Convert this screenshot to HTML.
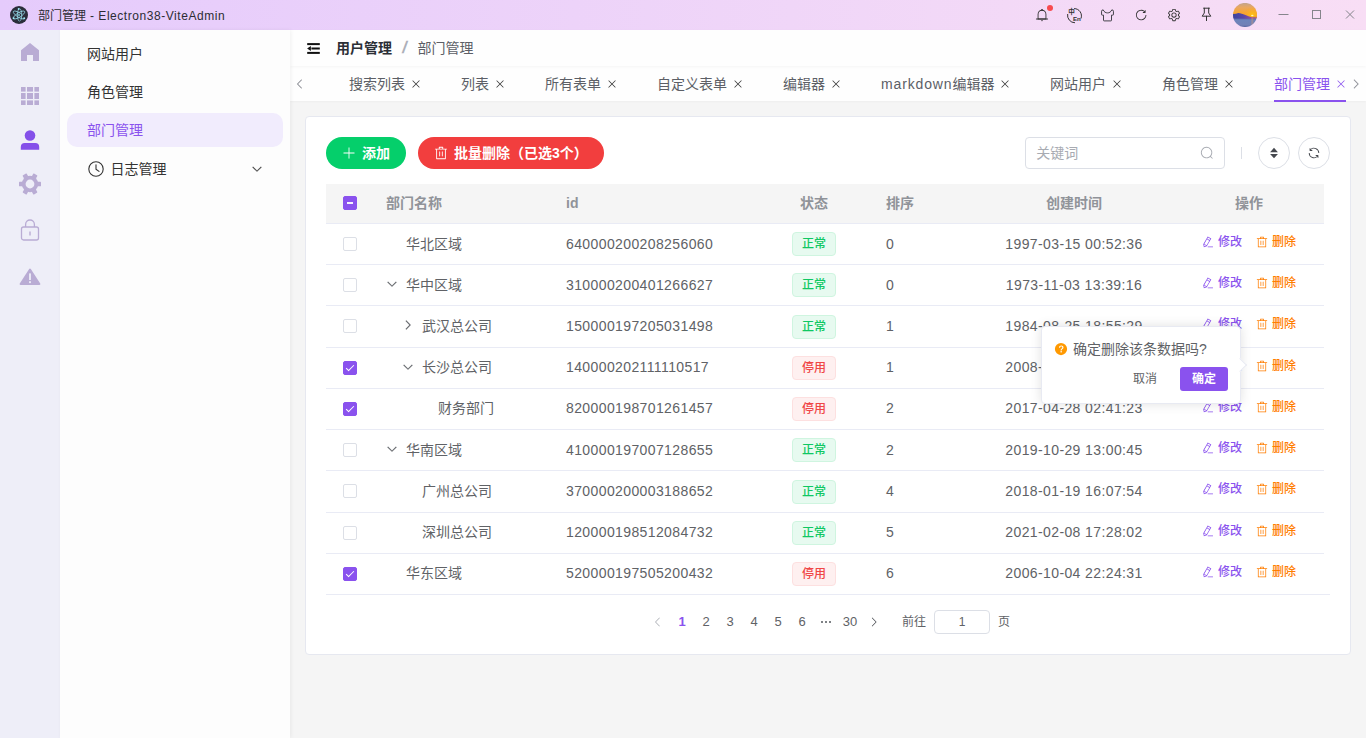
<!DOCTYPE html>
<html lang="zh-CN">
<head>
<meta charset="utf-8">
<title>部门管理 - Electron38-ViteAdmin</title>
<style>
*{box-sizing:border-box;margin:0;padding:0}
html,body{width:1366px;height:738px;overflow:hidden}
body{position:relative;font-family:"Liberation Sans","Noto Sans CJK SC",sans-serif;font-size:14px;color:#606266;background:#f5f5f5}
.abs{position:absolute}
svg{display:block}
/* title bar */
#titlebar{position:absolute;left:0;top:0;width:1366px;height:30px;background:linear-gradient(90deg,#e5cbfc 0%,#f8def5 100%)}
#titlebar .ttl{position:absolute;left:38px;top:0.6px;height:30px;line-height:31px;font-size:12px;color:#2c2c34;white-space:nowrap}
#titlebar .ti{position:absolute;top:0;height:30px}
/* icon bar */
#iconbar{position:absolute;left:0;top:30px;width:60px;height:708px;background:#eeeef8}
#iconbar svg{position:absolute}
/* submenu */
#submenu{position:absolute;left:60px;top:30px;width:230px;height:708px;background:#fdfdfd;box-shadow:1px 0 4px rgba(0,0,0,.06);z-index:3}
#submenu .mi{position:absolute;left:7px;width:216px;height:34px;line-height:35.4px;padding-left:20px;font-size:14px;color:#333;border-radius:10px;white-space:nowrap}
#submenu .mi.act{background:#f1ecfd;color:#8a52ee}
/* header */
#header{position:absolute;left:290px;top:30px;width:1076px;height:36px;background:#fefefe;z-index:2;box-shadow:0 1px 3px rgba(0,0,0,.04)}
#tabs{position:absolute;left:290px;top:66px;width:1076px;height:35px;background:#fefefe;z-index:1;box-shadow:0 1px 2px rgba(0,0,0,.03)}
#tabs .tab{position:absolute;top:0;height:36px;line-height:36px;font-size:14px;color:#5c5f66;white-space:nowrap}
#tabs .tab .x{display:inline-block;width:12px;height:12px;margin-left:4.5px;margin-right:-0.5px;vertical-align:-0.7px;fill:#333}
#tabs .tab.act{color:#8a52ee}
#tabs .tab.act .x{fill:#8a52ee}
/* card */
#card{position:absolute;left:305px;top:116px;width:1046px;height:539px;background:#fff;border:1px solid #e6e8f0;border-radius:4px}

/* toolbar (coordinates relative to card's padding box: card at 305,116 with 1px border => origin 306,117) */
.btn{position:absolute;top:20px;height:32px;border-radius:16px;color:#fff;font-size:14px;font-weight:700;line-height:32px;white-space:nowrap}
.btn svg{position:absolute;top:9px}
.btn span{position:absolute;top:0}
#search{position:absolute;left:719px;top:20px;width:200px;height:32px;border:1px solid #dcdfe6;border-radius:4px;background:#fff}
#search .ph{position:absolute;left:10.3px;top:0;line-height:30px;font-size:14px;color:#a8abb2}
.cbtn{position:absolute;top:20px;width:32px;height:32px;border:1px solid #dcdfe6;border-radius:50%;background:#fff}
/* table */
#thead{position:absolute;left:20px;top:67px;width:998px;height:40px;background:#f5f5f5;border-bottom:1px solid #e9ebf5;font-weight:700;color:#909399;font-size:14px;line-height:38px}
.row{position:absolute;left:20px;width:998px;height:41px;border-bottom:1px solid #e9ebf5;font-size:14px;line-height:40px;color:#606266}
.c{position:absolute;top:0.2px;white-space:nowrap}
#thead .c{top:0}
.row.up .c{top:-0.8px}
.num{letter-spacing:.39px}
.cb{position:absolute;left:17px;width:14px;height:14px;border:1px solid #dcdfe6;border-radius:2px;background:#fff}
.cb.on{background:#8a52ee;border-color:#8a52ee}
.cb.on:after{content:"";position:absolute;left:4px;top:1px;width:3px;height:7px;border:1px solid #fff;border-left:0;border-top:0;transform:rotate(45deg)}
.cb.ind{background:#8a52ee;border-color:#8a52ee}
.cb.ind:after{content:"";position:absolute;left:3px;top:5.2px;width:6px;height:1.5px;background:#fff;opacity:.92}
.tag{position:absolute;left:466px;top:8px;width:44px;height:24px;border-radius:4px;font-size:12px;font-weight:500;line-height:22px;text-align:center;border:1px solid}
.tag.ok{color:#0fc863;background:#e7faf0;border-color:#cff5e0}
.tag.no{color:#f04646;background:#fef0f0;border-color:#fde0e0}
.op{position:absolute;top:0;font-size:12px;font-weight:500;line-height:37px;white-space:nowrap}
.op svg{position:absolute;top:12px}
.exp{position:absolute;top:14.5px}
/* pagination */
#pager{position:absolute;left:340px;top:493px;height:24px;line-height:24px;font-size:13px;color:#606266;white-space:nowrap}
#pager .p{position:absolute;top:0;width:24px;text-align:center}
/* popconfirm */
#pop{position:absolute;left:1041px;top:326px;width:200px;height:78px;background:#fff;border:1px solid #e8eaf2;border-radius:4px;box-shadow:0 0 12px rgba(0,0,0,.12);z-index:10}
</style>
</head>
<body>
<div id="titlebar">
  <svg class="abs" style="left:10px;top:6px" width="18" height="18" viewBox="0 0 18 18">
    <circle cx="9" cy="9" r="9" fill="#2b2e3b"/>
    <g fill="none" stroke="#9feaf8" stroke-width=".8" opacity=".9">
      <ellipse cx="9" cy="9" rx="6.6" ry="2.2" transform="rotate(-32 9 9)" stroke-dasharray="30 4"/>
      <ellipse cx="9" cy="9" rx="6.6" ry="2.2" transform="rotate(32 9 9)" stroke-dasharray="24 6"/>
      <ellipse cx="9.6" cy="9" rx="6.2" ry="2.2" transform="rotate(90 9.6 9)" stroke-dasharray="26 4"/>
    </g>
    <circle cx="9" cy="9" r=".9" fill="#7fc8d6"/>
    <circle cx="8.6" cy="3" r=".9" fill="#9feaf8"/><circle cx="3.6" cy="12.2" r="1" fill="#9feaf8"/><circle cx="14.2" cy="12.2" r="1" fill="#9feaf8"/>
  </svg>
  <div class="ttl">部门管理<span style="letter-spacing:.55px"> - Electron38-ViteAdmin</span></div>
  <!-- bell -->
  <svg class="abs" style="left:1035px;top:8px" width="14" height="14" viewBox="0 0 1024 1024" fill="#333"><path d="M512 64a64 64 0 0 1 64 64v64H448v-64a64 64 0 0 1 64-64"/><path d="M256 768h512V448a256 256 0 1 0-512 0zm256-640a320 320 0 0 1 320 320v384H192V448a320 320 0 0 1 320-320"/><path d="M96 768h832q32 0 32 32t-32 32H96q-32 0-32-32t32-32m352 128h128a64 64 0 0 1-128 0"/></svg>
  <div class="abs" style="left:1046.6px;top:4.6px;width:6.8px;height:6.8px;border-radius:50%;background:#f84a4f"></div>
  <!-- translate -->
  <svg class="abs" style="left:1066px;top:6.6px" width="17" height="17" viewBox="0 0 17 17">
    <path d="M8.5 1.55 A7.1 7.1 0 0 1 15.1 11.2" fill="none" stroke="#333" stroke-width="1" stroke-linecap="round"/>
    <path d="M8.6 15.75 A7.1 7.1 0 0 1 1.6 7.4" fill="none" stroke="#333" stroke-width="1" stroke-linecap="round"/>
    <text x="2.3" y="7.4" font-size="6.6" font-weight="700" fill="#333" font-family="Liberation Sans, Noto Sans CJK SC, sans-serif">中</text>
    <text x="6.9" y="14" font-size="6.2" font-weight="700" fill="#333" font-family="Liberation Sans, sans-serif">En</text>
  </svg>
  <!-- tshirt -->
  <svg class="abs" style="left:1101px;top:8.5px" width="13" height="13" viewBox="0 0 13 13" fill="none" stroke="#3c3c42" stroke-width=".95" stroke-linejoin="round"><path d="M2.2 0.9 Q0.55 0.9 0.55 2.2 V5.6 Q0.55 6.1 1.05 6.1 H2.5 V11.3 Q2.5 11.9 3.1 11.9 H9.9 Q10.5 11.9 10.5 11.3 V6.1 H11.95 Q12.45 6.1 12.45 5.6 V2.2 Q12.45 0.9 10.8 0.9 C9.9 3 8.3 3.9 6.5 3.9 C4.7 3.9 3.1 3 2.2 0.9 Z"/></svg>
  <!-- refresh -->
  <svg class="abs" style="left:1134px;top:8px" width="14" height="14" viewBox="0 0 1024 1024" fill="#333"><path d="M784.512 230.272v-50.56a32 32 0 1 1 64 0v149.056a32 32 0 0 1-32 32H667.52a32 32 0 1 1 0-64h92.992A320 320 0 1 0 524.8 833.152a320 320 0 0 0 320-320h64a384 384 0 0 1-384 384 384 384 0 0 1-384-384 384 384 0 0 1 643.712-282.88z"/></svg>
  <!-- setting -->
  <svg class="abs" style="left:1167px;top:8px" width="14" height="14" viewBox="0 0 1024 1024" fill="#333"><path d="M600.704 64a32 32 0 0 1 30.464 22.208l35.2 109.376c14.784 7.232 28.928 15.36 42.432 24.512l112.384-24.192a32 32 0 0 1 34.432 15.36L944.32 364.8a32 32 0 0 1-4.032 37.504l-77.12 85.12a357.12 357.12 0 0 1 0 49.024l77.12 85.248a32 32 0 0 1 4.032 37.504l-88.704 153.6a32 32 0 0 1-34.432 15.296L708.8 803.904c-13.44 9.088-27.648 17.28-42.368 24.512l-35.264 109.376A32 32 0 0 1 600.704 960H423.296a32 32 0 0 1-30.464-22.208L357.696 828.48a351.616 351.616 0 0 1-42.56-24.64l-112.32 24.256a32 32 0 0 1-34.432-15.36L79.68 659.2a32 32 0 0 1 4.032-37.504l77.12-85.248a357.12 357.12 0 0 1 0-48.896l-77.12-85.248A32 32 0 0 1 79.68 364.8l88.704-153.6a32 32 0 0 1 34.432-15.296l112.32 24.256c13.568-9.152 27.776-17.408 42.56-24.64l35.2-109.312A32 32 0 0 1 423.232 64H600.64zm-23.424 64H446.72l-36.352 113.088-24.512 11.968a294.113 294.113 0 0 0-34.816 20.096l-22.656 15.36-116.224-25.088-65.28 113.152 79.68 88.192-1.92 27.136a293.12 293.12 0 0 0 0 40.192l1.92 27.136-79.808 88.192 65.344 113.152 116.224-25.024 22.656 15.296a294.113 294.113 0 0 0 34.816 20.096l24.512 11.968L446.72 896h130.688l36.48-113.152 24.448-11.904a288.282 288.282 0 0 0 34.752-20.096l22.592-15.296 116.288 25.024 65.28-113.152-79.744-88.192 1.92-27.136a293.12 293.12 0 0 0 0-40.256l-1.92-27.136 79.808-88.128-65.344-113.152-116.288 24.96-22.592-15.232a287.616 287.616 0 0 0-34.752-20.096l-24.448-11.904L577.344 128zM512 320a192 192 0 1 1 0 384 192 192 0 0 1 0-384m0 64a128 128 0 1 0 0 256 128 128 0 0 0 0-256"/></svg>
  <!-- pin -->
  <svg class="abs" style="left:1200px;top:7px" width="13" height="15" viewBox="0 0 13 15" fill="none" stroke="#333" stroke-width="1" stroke-linejoin="round" stroke-linecap="round"><path d="M3.6 1.2 H9.4 M4.3 1.2 V6 L2.2 9.2 H10.8 L8.7 6 V1.2 M6.5 9.2 V13.6"/></svg>
  <!-- avatar -->
  <svg class="abs" style="left:1233px;top:3px" width="24" height="24" viewBox="0 0 24 24">
    <defs>
      <clipPath id="avc"><circle cx="12" cy="11.9" r="12"/></clipPath>
      <linearGradient id="sky" x1="0" y1="0" x2="0" y2="1"><stop offset="0" stop-color="#c3a48e"/><stop offset="0.3" stop-color="#e9a760"/><stop offset="0.65" stop-color="#f7a532"/><stop offset="1" stop-color="#f39a2c"/></linearGradient>
      <linearGradient id="sea" x1="0" y1="0" x2="0" y2="1"><stop offset="0" stop-color="#5a62aa"/><stop offset="0.3" stop-color="#6d84bb"/><stop offset="0.8" stop-color="#7281b6"/><stop offset="1" stop-color="#4f5f9c"/></linearGradient>
      <linearGradient id="mtn" x1="0" y1="0" x2="1" y2="0"><stop offset="0" stop-color="#3c44a0"/><stop offset="0.45" stop-color="#5a47a6"/><stop offset="0.75" stop-color="#8a4fa0"/><stop offset="1" stop-color="#c9705e"/></linearGradient>
      <radialGradient id="sun" gradientUnits="userSpaceOnUse" cx="19.3" cy="12.4" r="9"><stop offset="0" stop-color="#ffc60f" stop-opacity="1"/><stop offset="0.4" stop-color="#fbb41c" stop-opacity=".8"/><stop offset="1" stop-color="#f7a532" stop-opacity="0"/></radialGradient>
    </defs>
    <g clip-path="url(#avc)">
      <rect width="24" height="15" fill="url(#sky)"/>
      <rect width="24" height="15" fill="url(#sun)"/>
      <rect y="14.6" width="24" height="9.4" fill="url(#sea)"/>
      <path d="M0 11 L3 10.7 L5.2 10 L7 10.3 L9.6 11 L12.5 12 L15.5 13.2 L18 13.9 L24 13.7 L24 15.4 L14 15.8 L0 15.6 Z" fill="url(#mtn)"/>
      <rect x="18.3" y="14.2" width="2" height="7.5" fill="#e09a72" opacity=".38"/>
      <ellipse cx="19.3" cy="12.5" rx="1.2" ry=".7" fill="#fff1b8"/>
    </g>
  </svg>
  <!-- window controls -->
  <svg class="abs" style="left:1278px;top:9px" width="80" height="12" viewBox="0 0 80 12" fill="none" stroke="#85858c" stroke-width="1"><path d="M0.5 5.5 H10.5"/><rect x="34.5" y="1.5" width="8" height="8"/><path d="M68 1.5 L76 9.5 M76 1.5 L68 9.5"/></svg>
</div>
<div id="iconbar">
  <!-- home -->
  <svg style="left:21px;top:13px" width="18" height="18" viewBox="0 0 18 18"><path d="M9 0 L18 7.2 V18 H12 V12 H6 V18 H0 V7.2 Z" fill="#b9acd4"/></svg>
  <!-- grid -->
  <svg style="left:21px;top:57px" width="18" height="18" viewBox="0 0 18 18" fill="#b9acd4"><rect x="0" y="0" width="4.6" height="4.6"/><rect x="6" y="0" width="6" height="4.6"/><rect x="13.4" y="0" width="4.6" height="4.6"/><rect x="0" y="6" width="4.6" height="6"/><rect x="6" y="6" width="6" height="6"/><rect x="13.4" y="6" width="4.6" height="6"/><rect x="0" y="13.4" width="4.6" height="4.6"/><rect x="6" y="13.4" width="6" height="4.6"/><rect x="13.4" y="13.4" width="4.6" height="4.6"/></svg>
  <!-- user -->
  <svg style="left:20px;top:100px" width="20" height="20" viewBox="0 0 20 20" fill="#8450e9"><circle cx="10" cy="5.5" r="5.3"/><path d="M0.8 19.8 V17 a4 4 0 0 1 4 -4 H15.2 a4 4 0 0 1 4 4 V19.8 Z"/></svg>
  <!-- gear -->
  <svg style="left:18px;top:142px" width="24" height="24" viewBox="-12 -12 24 24"><g fill="#b9acd4"><circle r="8.2"/><rect x="-2.3" y="-11" width="4.6" height="5" rx=".6" transform="rotate(30)"/><rect x="-2.3" y="-11" width="4.6" height="5" rx=".6" transform="rotate(90)"/><rect x="-2.3" y="-11" width="4.6" height="5" rx=".6" transform="rotate(150)"/><rect x="-2.3" y="-11" width="4.6" height="5" rx=".6" transform="rotate(210)"/><rect x="-2.3" y="-11" width="4.6" height="5" rx=".6" transform="rotate(270)"/><rect x="-2.3" y="-11" width="4.6" height="5" rx=".6" transform="rotate(330)"/></g><circle r="4.4" fill="#eeeef8"/></svg>
  <!-- lock -->
  <svg style="left:20px;top:189px" width="20" height="22" viewBox="0 0 20 22" fill="none" stroke="#b9acd4" stroke-width="1.3"><rect x="1.5" y="8" width="17" height="13" rx="2"/><path d="M5.6 8 V5.4 a4.4 4.4 0 0 1 8.8 0 V8"/><path d="M10 12.6 V16.4" stroke-width="1.4"/></svg>
  <!-- warning -->
  <svg style="left:19px;top:238px" width="22" height="18" viewBox="0 0 22 18"><path d="M11 1.6 L20.4 16 H1.6 Z" fill="#b9acd4" stroke="#b9acd4" stroke-width="2" stroke-linejoin="round"/><rect x="10.1" y="5.4" width="1.8" height="6.6" fill="#eeeef8"/><rect x="10.1" y="13.2" width="1.8" height="1.9" fill="#eeeef8"/></svg>
</div>
<div id="submenu">
  <div class="mi" style="top:6.7px">网站用户</div>
  <div class="mi" style="top:44.5px">角色管理</div>
  <div class="mi act" style="top:83px">部门管理</div>
  <div class="mi" style="top:121.5px"><svg class="abs" style="left:21px;top:9px" width="16" height="16" viewBox="0 0 16 16" fill="none" stroke="#333" stroke-width="1.1" stroke-linecap="round" stroke-linejoin="round"><circle cx="8" cy="8" r="7.2"/><path d="M8 3.7 V8.2 L11 10.4"/></svg><span style="margin-left:23.5px">日志管理</span><svg class="abs" style="left:184px;top:11px" width="12" height="12" viewBox="0 0 1024 1024" fill="#333" stroke="#333" stroke-width="30"><path d="M831.872 340.864 512 652.672 192.128 340.864a30.592 30.592 0 0 0-42.752 0 29.120 29.120 0 0 0 0 41.600L489.664 714.240a32 32 0 0 0 44.672 0l340.288-331.712a29.120 29.120 0 0 0 0-41.728 30.592 30.592 0 0 0-42.752 0z"/></svg></div>
</div>
<div id="header">
  <svg class="abs" style="left:16.5px;top:12.5px" width="13" height="11" viewBox="0 0 13 11" fill="#111"><rect x="0.2" y="0.1" width="12.6" height="2"/><rect x="4.4" y="4.5" width="8.4" height="2"/><rect x="0.2" y="8.9" width="12.6" height="2"/><path d="M3.9 3 V8 L0.1 5.5 Z"/></svg>
  <div class="abs" style="left:46px;top:0;height:36px;line-height:36px;font-size:14px;white-space:nowrap"><b style="color:#2b2f36">用户管理</b><span style="display:inline-block;width:25.5px;text-align:center;color:#adb0b9;font-weight:700;font-size:17px;line-height:30px;vertical-align:0.5px;transform:skewX(-10deg)">/</span><span style="color:#5c5f66">部门管理</span></div>
</div>
<div id="tabs">
  <svg class="abs" style="left:4px;top:12px" width="12" height="12" viewBox="0 0 1024 1024" fill="#85888f" stroke="#85888f" stroke-width="20"><path d="M609.408 149.376 277.76 489.600a32 32 0 0 0 0 44.672l331.648 340.352a29.120 29.120 0 0 0 41.728 0 30.592 30.592 0 0 0 0-42.752L339.264 511.936l311.872-319.872a30.592 30.592 0 0 0 0-42.688 29.120 29.120 0 0 0-41.728 0z"/></svg>
  <div class="tab" style="left:59px">搜索列表<svg class="x" width="12" height="12" viewBox="0 0 1024 1024"><path d="M764.288 214.592 512 466.88 259.712 214.592a31.936 31.936 0 0 0-45.120 45.120L466.752 512 214.528 764.224a31.936 31.936 0 1 0 45.120 45.184L512 557.184l252.288 252.288a31.936 31.936 0 0 0 45.120-45.120L557.120 512.064l252.288-252.352a31.936 31.936 0 1 0-45.120-45.184z"/></svg></div>
  <div class="tab" style="left:171px">列表<svg class="x" width="12" height="12" viewBox="0 0 1024 1024"><path d="M764.288 214.592 512 466.88 259.712 214.592a31.936 31.936 0 0 0-45.120 45.120L466.752 512 214.528 764.224a31.936 31.936 0 1 0 45.120 45.184L512 557.184l252.288 252.288a31.936 31.936 0 0 0 45.120-45.120L557.120 512.064l252.288-252.352a31.936 31.936 0 1 0-45.120-45.184z"/></svg></div>
  <div class="tab" style="left:255px">所有表单<svg class="x" width="12" height="12" viewBox="0 0 1024 1024"><path d="M764.288 214.592 512 466.88 259.712 214.592a31.936 31.936 0 0 0-45.120 45.120L466.752 512 214.528 764.224a31.936 31.936 0 1 0 45.120 45.184L512 557.184l252.288 252.288a31.936 31.936 0 0 0 45.120-45.120L557.120 512.064l252.288-252.352a31.936 31.936 0 1 0-45.120-45.184z"/></svg></div>
  <div class="tab" style="left:367px">自定义表单<svg class="x" width="12" height="12" viewBox="0 0 1024 1024"><path d="M764.288 214.592 512 466.88 259.712 214.592a31.936 31.936 0 0 0-45.120 45.120L466.752 512 214.528 764.224a31.936 31.936 0 1 0 45.120 45.184L512 557.184l252.288 252.288a31.936 31.936 0 0 0 45.120-45.120L557.120 512.064l252.288-252.352a31.936 31.936 0 1 0-45.120-45.184z"/></svg></div>
  <div class="tab" style="left:493px">编辑器<svg class="x" width="12" height="12" viewBox="0 0 1024 1024"><path d="M764.288 214.592 512 466.88 259.712 214.592a31.936 31.936 0 0 0-45.120 45.120L466.752 512 214.528 764.224a31.936 31.936 0 1 0 45.120 45.184L512 557.184l252.288 252.288a31.936 31.936 0 0 0 45.120-45.120L557.120 512.064l252.288-252.352a31.936 31.936 0 1 0-45.120-45.184z"/></svg></div>
  <div class="tab" style="left:591px"><span style="letter-spacing:.85px">markdown</span>编辑器<svg class="x" width="12" height="12" viewBox="0 0 1024 1024"><path d="M764.288 214.592 512 466.88 259.712 214.592a31.936 31.936 0 0 0-45.120 45.120L466.752 512 214.528 764.224a31.936 31.936 0 1 0 45.120 45.184L512 557.184l252.288 252.288a31.936 31.936 0 0 0 45.120-45.120L557.120 512.064l252.288-252.352a31.936 31.936 0 1 0-45.120-45.184z"/></svg></div>
  <div class="tab" style="left:760px">网站用户<svg class="x" width="12" height="12" viewBox="0 0 1024 1024"><path d="M764.288 214.592 512 466.88 259.712 214.592a31.936 31.936 0 0 0-45.120 45.120L466.752 512 214.528 764.224a31.936 31.936 0 1 0 45.120 45.184L512 557.184l252.288 252.288a31.936 31.936 0 0 0 45.120-45.120L557.120 512.064l252.288-252.352a31.936 31.936 0 1 0-45.120-45.184z"/></svg></div>
  <div class="tab" style="left:872px">角色管理<svg class="x" width="12" height="12" viewBox="0 0 1024 1024"><path d="M764.288 214.592 512 466.88 259.712 214.592a31.936 31.936 0 0 0-45.120 45.120L466.752 512 214.528 764.224a31.936 31.936 0 1 0 45.120 45.184L512 557.184l252.288 252.288a31.936 31.936 0 0 0 45.120-45.120L557.120 512.064l252.288-252.352a31.936 31.936 0 1 0-45.120-45.184z"/></svg></div>
  <div class="tab act" style="left:984px">部门管理<svg class="x" width="12" height="12" viewBox="0 0 1024 1024"><path d="M764.288 214.592 512 466.88 259.712 214.592a31.936 31.936 0 0 0-45.120 45.120L466.752 512 214.528 764.224a31.936 31.936 0 1 0 45.120 45.184L512 557.184l252.288 252.288a31.936 31.936 0 0 0 45.120-45.120L557.120 512.064l252.288-252.352a31.936 31.936 0 1 0-45.120-45.184z"/></svg></div>
  <div class="abs" style="left:984px;top:34px;width:72px;height:2px;background:#8a52ee"></div>
  <svg class="abs" style="left:1060px;top:12px" width="12" height="12" viewBox="0 0 1024 1024" fill="#85888f" stroke="#85888f" stroke-width="20"><path d="M340.864 149.312a30.592 30.592 0 0 0 0 42.752L652.736 512 340.864 831.872a30.592 30.592 0 0 0 0 42.752 29.120 29.120 0 0 0 41.728 0L714.24 534.336a32 32 0 0 0 0-44.672L382.592 149.376a29.120 29.120 0 0 0-41.728 0z"/></svg>
</div>
<div id="card">
  <div class="btn" style="left:20px;width:80px;background:#05cf6b"><svg style="left:16px" width="14" height="14" viewBox="0 0 1024 1024" fill="#fff"><path d="M480 480V128a32 32 0 0 1 64 0v352h352a32 32 0 1 1 0 64H544v352a32 32 0 1 1-64 0V544H128a32 32 0 0 1 0-64z"/></svg><span style="left:36px">添加</span></div>
  <div class="btn" style="left:112px;width:186px;background:#f23e3e"><svg style="left:16px" width="14" height="14" viewBox="0 0 1024 1024" fill="#fff"><path d="M160 256H96a32 32 0 0 1 0-64h256V95.936a32 32 0 0 1 32-32h256a32 32 0 0 1 32 32V192h256a32 32 0 1 1 0 64h-64v672a32 32 0 0 1-32 32H192a32 32 0 0 1-32-32zm448-64v-64H416v64zM224 896h576V256H224zm192-128a32 32 0 0 1-32-32V416a32 32 0 0 1 64 0v320a32 32 0 0 1-32 32m192 0a32 32 0 0 1-32-32V416a32 32 0 0 1 64 0v320a32 32 0 0 1-32 32"/></svg><span style="left:36px">批量删除（已选3个）</span></div>
  <div id="search"><span class="ph">关键词</span><svg style="position:absolute;left:174px;top:8px" width="14" height="14" viewBox="0 0 1024 1024" fill="#a8abb2"><path d="m795.904 750.72 124.992 124.928a32 32 0 0 1-45.248 45.248L750.656 795.904a416 416 0 1 1 45.248-45.248zM480 832a352 352 0 1 0 0-704 352 352 0 0 0 0 704"/></svg></div>
  <div class="abs" style="left:935px;top:30px;width:1px;height:12px;background:#dcdfe6"></div>
  <div class="cbtn" style="left:952px"><svg style="position:absolute;left:8px;top:8px" width="14" height="14" viewBox="0 0 1024 1024" fill="#44474d"><path d="m512 128 288 320H224zM224 576h576L512 896z"/></svg></div>
  <div class="cbtn" style="left:992px"><svg style="position:absolute;left:8px;top:8px" width="14" height="14" viewBox="0 0 1024 1024" fill="#44474d"><path d="M771.776 794.88A384 384 0 0 1 128 512h64a320 320 0 0 0 555.712 216.448H654.72a32 32 0 1 1 0-64h149.056a32 32 0 0 1 32 32v148.928a32 32 0 1 1-64 0v-50.56zM276.288 295.616h92.992a32 32 0 0 1 0 64H220.16a32 32 0 0 1-32-32V178.56a32 32 0 0 1 64 0v50.56A384 384 0 0 1 896.128 512h-64a320 320 0 0 0-555.776-216.384z"/></svg></div>
  <div id="thead"><div class="cb ind" style="top:12px"></div><div class="c" style="left:60px">部门名称</div><div class="c" style="left:240px">id</div><div class="c" style="left:428px;width:120px;text-align:center">状态</div><div class="c" style="left:560px">排序</div><div class="c" style="left:648px;width:200px;text-align:center">创建时间</div><div class="c" style="left:848px;width:150px;text-align:center">操作</div></div>
  <div class="row" style="top:107px;height:41px"><div class="cb" style="top:13px"></div><div class="c" style="left:80px">华北区域</div><div class="c num" style="left:240px">640000200208256060</div><div class="tag ok">正常</div><div class="c num" style="left:560px">0</div><div class="c num" style="left:648px;width:200px;text-align:center">1997-03-15 00:52:36</div><div class="op" style="left:876px;color:#8a52ee"><svg style="left:0" width="12" height="12" viewBox="0 0 1024 1024" fill="#8a52ee"><path d="m199.040 672.640 193.984 112 224-387.968-193.920-112-224 388.032zm-23.872 60.160 32.896 148.288 144.896-45.696zM455.040 229.248l193.920 112 56.704-98.112-193.984-112-56.640 98.112zM104.320 708.800l384-665.024 304.768 175.936L409.152 884.800h.064l-248.448 78.336zm384 254.272v-64h448v64h-448z"/></svg><span style="margin-left:16px">修改</span></div><div class="op" style="left:930px;color:#ff7d00"><svg style="left:0" width="12" height="12" viewBox="0 0 1024 1024" fill="#ff7d00"><path d="M160 256H96a32 32 0 0 1 0-64h256V95.936a32 32 0 0 1 32-32h256a32 32 0 0 1 32 32V192h256a32 32 0 1 1 0 64h-64v672a32 32 0 0 1-32 32H192a32 32 0 0 1-32-32zm448-64v-64H416v64zM224 896h576V256H224zm192-128a32 32 0 0 1-32-32V416a32 32 0 0 1 64 0v320a32 32 0 0 1-32 32m192 0a32 32 0 0 1-32-32V416a32 32 0 0 1 64 0v320a32 32 0 0 1-32 32"/></svg><span style="margin-left:16px">删除</span></div></div>
  <div class="row" style="top:148px;height:41px"><div class="cb" style="top:13px"></div><svg style="position:absolute;left:60px;top:12.6px;transform:rotate(90deg);" width="12" height="12" viewBox="0 0 1024 1024" fill="#55585e" stroke="#55585e" stroke-width="36"><path d="M340.864 149.312a30.592 30.592 0 0 0 0 42.752L652.736 512 340.864 831.872a30.592 30.592 0 0 0 0 42.752 29.120 29.120 0 0 0 41.728 0L714.24 534.336a32 32 0 0 0 0-44.672L382.592 149.376a29.120 29.120 0 0 0-41.728 0z"/></svg><div class="c" style="left:80px">华中区域</div><div class="c num" style="left:240px">310000200401266627</div><div class="tag ok">正常</div><div class="c num" style="left:560px">0</div><div class="c num" style="left:648px;width:200px;text-align:center">1973-11-03 13:39:16</div><div class="op" style="left:876px;color:#8a52ee"><svg style="left:0" width="12" height="12" viewBox="0 0 1024 1024" fill="#8a52ee"><path d="m199.040 672.640 193.984 112 224-387.968-193.920-112-224 388.032zm-23.872 60.160 32.896 148.288 144.896-45.696zM455.040 229.248l193.920 112 56.704-98.112-193.984-112-56.640 98.112zM104.320 708.800l384-665.024 304.768 175.936L409.152 884.800h.064l-248.448 78.336zm384 254.272v-64h448v64h-448z"/></svg><span style="margin-left:16px">修改</span></div><div class="op" style="left:930px;color:#ff7d00"><svg style="left:0" width="12" height="12" viewBox="0 0 1024 1024" fill="#ff7d00"><path d="M160 256H96a32 32 0 0 1 0-64h256V95.936a32 32 0 0 1 32-32h256a32 32 0 0 1 32 32V192h256a32 32 0 1 1 0 64h-64v672a32 32 0 0 1-32 32H192a32 32 0 0 1-32-32zm448-64v-64H416v64zM224 896h576V256H224zm192-128a32 32 0 0 1-32-32V416a32 32 0 0 1 64 0v320a32 32 0 0 1-32 32m192 0a32 32 0 0 1-32-32V416a32 32 0 0 1 64 0v320a32 32 0 0 1-32 32"/></svg><span style="margin-left:16px">删除</span></div></div>
  <div class="row" style="top:189px;height:42px"><div class="cb" style="top:13px"></div><svg style="position:absolute;left:76px;top:12.6px;" width="12" height="12" viewBox="0 0 1024 1024" fill="#55585e" stroke="#55585e" stroke-width="36"><path d="M340.864 149.312a30.592 30.592 0 0 0 0 42.752L652.736 512 340.864 831.872a30.592 30.592 0 0 0 0 42.752 29.120 29.120 0 0 0 41.728 0L714.24 534.336a32 32 0 0 0 0-44.672L382.592 149.376a29.120 29.120 0 0 0-41.728 0z"/></svg><div class="c" style="left:96px">武汉总公司</div><div class="c num" style="left:240px">150000197205031498</div><div class="tag ok" style="top:9px">正常</div><div class="c num" style="left:560px">1</div><div class="c num" style="left:648px;width:200px;text-align:center">1984-08-25 18:55:29</div><div class="op" style="left:876px;color:#8a52ee"><svg style="left:0" width="12" height="12" viewBox="0 0 1024 1024" fill="#8a52ee"><path d="m199.040 672.640 193.984 112 224-387.968-193.920-112-224 388.032zm-23.872 60.160 32.896 148.288 144.896-45.696zM455.040 229.248l193.920 112 56.704-98.112-193.984-112-56.640 98.112zM104.320 708.800l384-665.024 304.768 175.936L409.152 884.800h.064l-248.448 78.336zm384 254.272v-64h448v64h-448z"/></svg><span style="margin-left:16px">修改</span></div><div class="op" style="left:930px;color:#ff7d00"><svg style="left:0" width="12" height="12" viewBox="0 0 1024 1024" fill="#ff7d00"><path d="M160 256H96a32 32 0 0 1 0-64h256V95.936a32 32 0 0 1 32-32h256a32 32 0 0 1 32 32V192h256a32 32 0 1 1 0 64h-64v672a32 32 0 0 1-32 32H192a32 32 0 0 1-32-32zm448-64v-64H416v64zM224 896h576V256H224zm192-128a32 32 0 0 1-32-32V416a32 32 0 0 1 64 0v320a32 32 0 0 1-32 32m192 0a32 32 0 0 1-32-32V416a32 32 0 0 1 64 0v320a32 32 0 0 1-32 32"/></svg><span style="margin-left:16px">删除</span></div></div>
  <div class="row up" style="top:231px;height:41px"><div class="cb on" style="top:13px"></div><svg style="position:absolute;left:76px;top:12.6px;transform:rotate(90deg);" width="12" height="12" viewBox="0 0 1024 1024" fill="#55585e" stroke="#55585e" stroke-width="36"><path d="M340.864 149.312a30.592 30.592 0 0 0 0 42.752L652.736 512 340.864 831.872a30.592 30.592 0 0 0 0 42.752 29.120 29.120 0 0 0 41.728 0L714.24 534.336a32 32 0 0 0 0-44.672L382.592 149.376a29.120 29.120 0 0 0-41.728 0z"/></svg><div class="c" style="left:96px">长沙总公司</div><div class="c num" style="left:240px">140000202111110517</div><div class="tag no">停用</div><div class="c num" style="left:560px">1</div><div class="c num" style="left:648px;width:200px;text-align:center">2008-06-12 09:21:47</div><div class="op" style="left:876px;color:#8a52ee"><svg style="left:0" width="12" height="12" viewBox="0 0 1024 1024" fill="#8a52ee"><path d="m199.040 672.640 193.984 112 224-387.968-193.920-112-224 388.032zm-23.872 60.160 32.896 148.288 144.896-45.696zM455.040 229.248l193.920 112 56.704-98.112-193.984-112-56.640 98.112zM104.320 708.800l384-665.024 304.768 175.936L409.152 884.800h.064l-248.448 78.336zm384 254.272v-64h448v64h-448z"/></svg><span style="margin-left:16px">修改</span></div><div class="op" style="left:930px;color:#ff7d00"><svg style="left:0" width="12" height="12" viewBox="0 0 1024 1024" fill="#ff7d00"><path d="M160 256H96a32 32 0 0 1 0-64h256V95.936a32 32 0 0 1 32-32h256a32 32 0 0 1 32 32V192h256a32 32 0 1 1 0 64h-64v672a32 32 0 0 1-32 32H192a32 32 0 0 1-32-32zm448-64v-64H416v64zM224 896h576V256H224zm192-128a32 32 0 0 1-32-32V416a32 32 0 0 1 64 0v320a32 32 0 0 1-32 32m192 0a32 32 0 0 1-32-32V416a32 32 0 0 1 64 0v320a32 32 0 0 1-32 32"/></svg><span style="margin-left:16px">删除</span></div></div>
  <div class="row up" style="top:272px;height:41px"><div class="cb on" style="top:13px"></div><div class="c" style="left:112px">财务部门</div><div class="c num" style="left:240px">820000198701261457</div><div class="tag no">停用</div><div class="c num" style="left:560px">2</div><div class="c num" style="left:648px;width:200px;text-align:center">2017-04-28 02:41:23</div><div class="op" style="left:876px;color:#8a52ee"><svg style="left:0" width="12" height="12" viewBox="0 0 1024 1024" fill="#8a52ee"><path d="m199.040 672.640 193.984 112 224-387.968-193.920-112-224 388.032zm-23.872 60.160 32.896 148.288 144.896-45.696zM455.040 229.248l193.920 112 56.704-98.112-193.984-112-56.640 98.112zM104.320 708.800l384-665.024 304.768 175.936L409.152 884.800h.064l-248.448 78.336zm384 254.272v-64h448v64h-448z"/></svg><span style="margin-left:16px">修改</span></div><div class="op" style="left:930px;color:#ff7d00"><svg style="left:0" width="12" height="12" viewBox="0 0 1024 1024" fill="#ff7d00"><path d="M160 256H96a32 32 0 0 1 0-64h256V95.936a32 32 0 0 1 32-32h256a32 32 0 0 1 32 32V192h256a32 32 0 1 1 0 64h-64v672a32 32 0 0 1-32 32H192a32 32 0 0 1-32-32zm448-64v-64H416v64zM224 896h576V256H224zm192-128a32 32 0 0 1-32-32V416a32 32 0 0 1 64 0v320a32 32 0 0 1-32 32m192 0a32 32 0 0 1-32-32V416a32 32 0 0 1 64 0v320a32 32 0 0 1-32 32"/></svg><span style="margin-left:16px">删除</span></div></div>
  <div class="row" style="top:313px;height:41px"><div class="cb" style="top:13px"></div><svg style="position:absolute;left:60px;top:12.6px;transform:rotate(90deg);" width="12" height="12" viewBox="0 0 1024 1024" fill="#55585e" stroke="#55585e" stroke-width="36"><path d="M340.864 149.312a30.592 30.592 0 0 0 0 42.752L652.736 512 340.864 831.872a30.592 30.592 0 0 0 0 42.752 29.120 29.120 0 0 0 41.728 0L714.24 534.336a32 32 0 0 0 0-44.672L382.592 149.376a29.120 29.120 0 0 0-41.728 0z"/></svg><div class="c" style="left:80px">华南区域</div><div class="c num" style="left:240px">410000197007128655</div><div class="tag ok">正常</div><div class="c num" style="left:560px">2</div><div class="c num" style="left:648px;width:200px;text-align:center">2019-10-29 13:00:45</div><div class="op" style="left:876px;color:#8a52ee"><svg style="left:0" width="12" height="12" viewBox="0 0 1024 1024" fill="#8a52ee"><path d="m199.040 672.640 193.984 112 224-387.968-193.920-112-224 388.032zm-23.872 60.160 32.896 148.288 144.896-45.696zM455.040 229.248l193.920 112 56.704-98.112-193.984-112-56.640 98.112zM104.320 708.800l384-665.024 304.768 175.936L409.152 884.800h.064l-248.448 78.336zm384 254.272v-64h448v64h-448z"/></svg><span style="margin-left:16px">修改</span></div><div class="op" style="left:930px;color:#ff7d00"><svg style="left:0" width="12" height="12" viewBox="0 0 1024 1024" fill="#ff7d00"><path d="M160 256H96a32 32 0 0 1 0-64h256V95.936a32 32 0 0 1 32-32h256a32 32 0 0 1 32 32V192h256a32 32 0 1 1 0 64h-64v672a32 32 0 0 1-32 32H192a32 32 0 0 1-32-32zm448-64v-64H416v64zM224 896h576V256H224zm192-128a32 32 0 0 1-32-32V416a32 32 0 0 1 64 0v320a32 32 0 0 1-32 32m192 0a32 32 0 0 1-32-32V416a32 32 0 0 1 64 0v320a32 32 0 0 1-32 32"/></svg><span style="margin-left:16px">删除</span></div></div>
  <div class="row" style="top:354px;height:42px"><div class="cb" style="top:13px"></div><div class="c" style="left:96px">广州总公司</div><div class="c num" style="left:240px">370000200003188652</div><div class="tag ok" style="top:9px">正常</div><div class="c num" style="left:560px">4</div><div class="c num" style="left:648px;width:200px;text-align:center">2018-01-19 16:07:54</div><div class="op" style="left:876px;color:#8a52ee"><svg style="left:0" width="12" height="12" viewBox="0 0 1024 1024" fill="#8a52ee"><path d="m199.040 672.640 193.984 112 224-387.968-193.920-112-224 388.032zm-23.872 60.160 32.896 148.288 144.896-45.696zM455.040 229.248l193.920 112 56.704-98.112-193.984-112-56.640 98.112zM104.320 708.800l384-665.024 304.768 175.936L409.152 884.800h.064l-248.448 78.336zm384 254.272v-64h448v64h-448z"/></svg><span style="margin-left:16px">修改</span></div><div class="op" style="left:930px;color:#ff7d00"><svg style="left:0" width="12" height="12" viewBox="0 0 1024 1024" fill="#ff7d00"><path d="M160 256H96a32 32 0 0 1 0-64h256V95.936a32 32 0 0 1 32-32h256a32 32 0 0 1 32 32V192h256a32 32 0 1 1 0 64h-64v672a32 32 0 0 1-32 32H192a32 32 0 0 1-32-32zm448-64v-64H416v64zM224 896h576V256H224zm192-128a32 32 0 0 1-32-32V416a32 32 0 0 1 64 0v320a32 32 0 0 1-32 32m192 0a32 32 0 0 1-32-32V416a32 32 0 0 1 64 0v320a32 32 0 0 1-32 32"/></svg><span style="margin-left:16px">删除</span></div></div>
  <div class="row up" style="top:396px;height:41px"><div class="cb" style="top:13px"></div><div class="c" style="left:96px">深圳总公司</div><div class="c num" style="left:240px">120000198512084732</div><div class="tag ok">正常</div><div class="c num" style="left:560px">5</div><div class="c num" style="left:648px;width:200px;text-align:center">2021-02-08 17:28:02</div><div class="op" style="left:876px;color:#8a52ee"><svg style="left:0" width="12" height="12" viewBox="0 0 1024 1024" fill="#8a52ee"><path d="m199.040 672.640 193.984 112 224-387.968-193.920-112-224 388.032zm-23.872 60.160 32.896 148.288 144.896-45.696zM455.040 229.248l193.920 112 56.704-98.112-193.984-112-56.640 98.112zM104.320 708.800l384-665.024 304.768 175.936L409.152 884.800h.064l-248.448 78.336zm384 254.272v-64h448v64h-448z"/></svg><span style="margin-left:16px">修改</span></div><div class="op" style="left:930px;color:#ff7d00"><svg style="left:0" width="12" height="12" viewBox="0 0 1024 1024" fill="#ff7d00"><path d="M160 256H96a32 32 0 0 1 0-64h256V95.936a32 32 0 0 1 32-32h256a32 32 0 0 1 32 32V192h256a32 32 0 1 1 0 64h-64v672a32 32 0 0 1-32 32H192a32 32 0 0 1-32-32zm448-64v-64H416v64zM224 896h576V256H224zm192-128a32 32 0 0 1-32-32V416a32 32 0 0 1 64 0v320a32 32 0 0 1-32 32m192 0a32 32 0 0 1-32-32V416a32 32 0 0 1 64 0v320a32 32 0 0 1-32 32"/></svg><span style="margin-left:16px">删除</span></div></div>
  <div class="row up" style="top:437px;height:41px"><div class="cb on" style="top:13px"></div><div class="c" style="left:80px">华东区域</div><div class="c num" style="left:240px">520000197505200432</div><div class="tag no">停用</div><div class="c num" style="left:560px">6</div><div class="c num" style="left:648px;width:200px;text-align:center">2006-10-04 22:24:31</div><div class="op" style="left:876px;color:#8a52ee"><svg style="left:0" width="12" height="12" viewBox="0 0 1024 1024" fill="#8a52ee"><path d="m199.040 672.640 193.984 112 224-387.968-193.920-112-224 388.032zm-23.872 60.160 32.896 148.288 144.896-45.696zM455.040 229.248l193.920 112 56.704-98.112-193.984-112-56.640 98.112zM104.320 708.800l384-665.024 304.768 175.936L409.152 884.800h.064l-248.448 78.336zm384 254.272v-64h448v64h-448z"/></svg><span style="margin-left:16px">修改</span></div><div class="op" style="left:930px;color:#ff7d00"><svg style="left:0" width="12" height="12" viewBox="0 0 1024 1024" fill="#ff7d00"><path d="M160 256H96a32 32 0 0 1 0-64h256V95.936a32 32 0 0 1 32-32h256a32 32 0 0 1 32 32V192h256a32 32 0 1 1 0 64h-64v672a32 32 0 0 1-32 32H192a32 32 0 0 1-32-32zm448-64v-64H416v64zM224 896h576V256H224zm192-128a32 32 0 0 1-32-32V416a32 32 0 0 1 64 0v320a32 32 0 0 1-32 32m192 0a32 32 0 0 1-32-32V416a32 32 0 0 1 64 0v320a32 32 0 0 1-32 32"/></svg><span style="margin-left:16px">删除</span></div></div>
  <div class="abs" style="left:1018px;top:477px;width:6px;height:1px;background:#e9ebf5"></div>
  <div id="pager"><svg style="position:absolute;left:6px;top:6px" width="12" height="12" viewBox="0 0 1024 1024" fill="#a8abb2"><path d="M609.408 149.376 277.76 489.600a32 32 0 0 0 0 44.672l331.648 340.352a29.120 29.120 0 0 0 41.728 0 30.592 30.592 0 0 0 0-42.752L339.264 511.936l311.872-319.872a30.592 30.592 0 0 0 0-42.688 29.120 29.120 0 0 0-41.728 0z"/></svg><span class="p" style="left:24px;color:#8a52ee;font-weight:700;">1</span><span class="p" style="left:48px;">2</span><span class="p" style="left:72px;">3</span><span class="p" style="left:96px;">4</span><span class="p" style="left:120px;">5</span><span class="p" style="left:144px;">6</span><svg style="position:absolute;left:174px;top:6px" width="12" height="12" viewBox="0 0 12 12" fill="#55585e"><circle cx="2" cy="6" r="1"/><circle cx="6" cy="6" r="1"/><circle cx="10" cy="6" r="1"/></svg><span class="p" style="left:192px">30</span><svg style="position:absolute;left:222px;top:6px" width="12" height="12" viewBox="0 0 1024 1024" fill="#44474d"><path d="M340.864 149.312a30.592 30.592 0 0 0 0 42.752L652.736 512 340.864 831.872a30.592 30.592 0 0 0 0 42.752 29.120 29.120 0 0 0 41.728 0L714.24 534.336a32 32 0 0 0 0-44.672L382.592 149.376a29.120 29.120 0 0 0-41.728 0z"/></svg><span class="abs" style="left:256px;top:0;font-size:12px">前往</span><span class="abs" style="left:288px;top:0;width:56px;height:24px;border:1px solid #dcdfe6;border-radius:4px;text-align:center;line-height:22px;font-size:12px">1</span><span class="abs" style="left:352px;top:0;font-size:12px">页</span></div>
</div>
<div id="pop">
  <div class="abs" style="left:192.5px;top:32.5px;width:10px;height:10px;background:#fff;border:1px solid #e8eaf2;border-left:0;border-bottom:0;transform:rotate(45deg)"></div>
  <svg class="abs" style="left:12px;top:15px" width="14" height="14" viewBox="0 0 1024 1024" fill="#ff9900"><path d="M512 64a448 448 0 1 1 0 896 448 448 0 0 1 0-896m23.744 191.488c-52.096 0-92.928 14.784-123.200 44.352-30.976 29.568-45.760 70.400-45.760 122.496h80.256c0-29.568 5.632-52.800 17.600-68.992 13.376-19.712 35.200-28.864 66.176-28.864 23.936 0 42.944 6.336 56.320 19.712 12.672 13.376 19.712 31.680 19.712 54.912 0 17.600-6.336 34.496-19.008 49.984l-8.448 9.856c-45.760 40.832-73.216 70.400-82.368 89.408-9.856 19.008-14.080 42.240-14.080 68.992v9.856h80.960v-9.856c0-16.896 3.520-31.680 10.560-45.760 6.336-12.672 15.488-24.640 28.160-35.200 33.792-29.568 54.208-48.576 60.544-55.616 16.896-22.528 26.048-51.392 26.048-86.592 0-42.944-14.080-76.736-42.240-101.376-28.160-25.344-65.472-37.312-111.232-37.312zm-12.672 406.208a54.272 54.272 0 0 0-38.720 14.784 49.408 49.408 0 0 0-15.488 38.016c0 15.488 4.928 28.160 15.488 38.016A54.848 54.848 0 0 0 523.072 768c15.488 0 28.160-4.928 38.720-14.784a51.520 51.520 0 0 0 16.192-38.720 51.968 51.968 0 0 0-15.488-38.016 55.936 55.936 0 0 0-39.424-14.784z"/></svg>
  <div class="abs" style="left:31px;top:11.6px;line-height:20px;font-size:14px;color:#606266;white-space:nowrap">确定删除该条数据吗?</div>
  <div class="abs" style="left:91px;top:40px;line-height:24px;font-size:12px;color:#606266">取消</div>
  <div class="abs" style="left:138px;top:40px;width:48px;height:24px;border-radius:3px;background:#8a52ee;color:#fff;font-size:12px;font-weight:700;line-height:24px;text-align:center">确定</div>
</div>
</body>
</html>
